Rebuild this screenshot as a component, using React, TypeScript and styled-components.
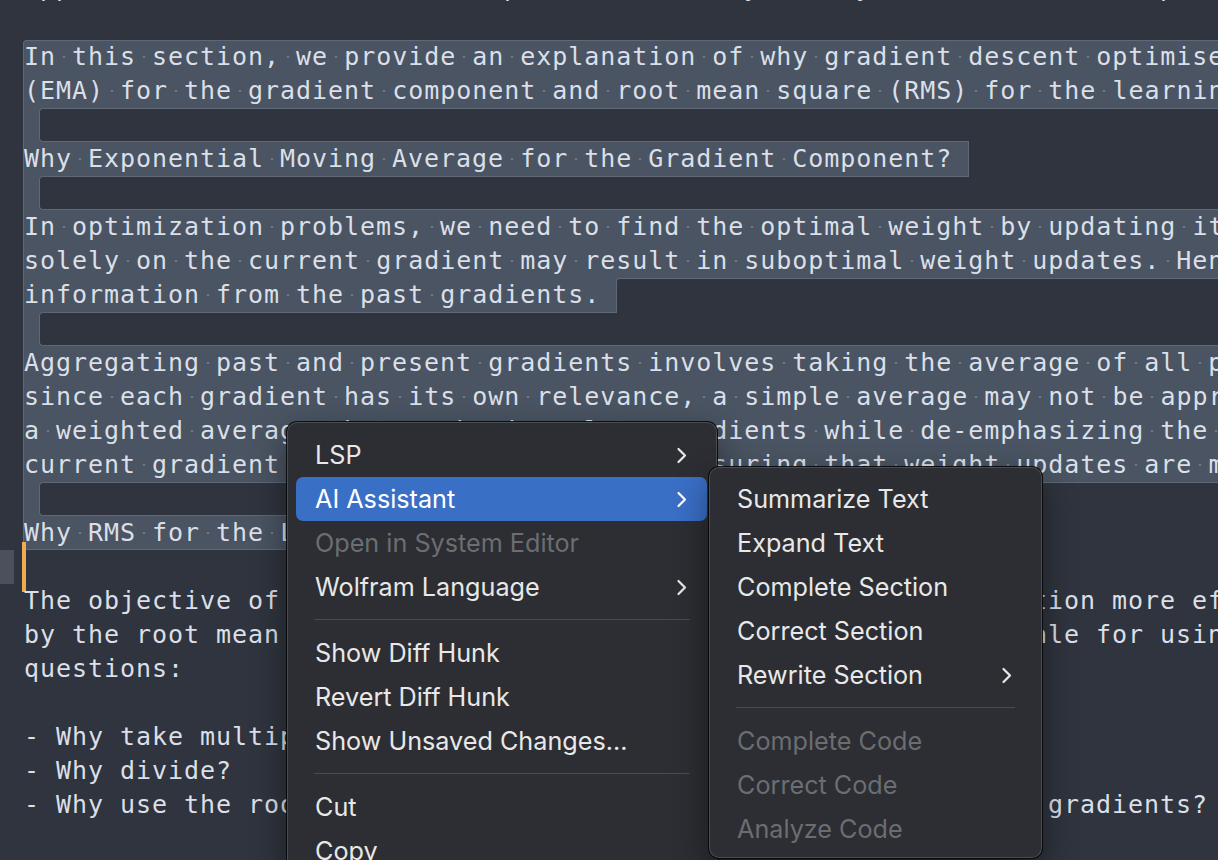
import React from 'react';
import styled, { createGlobalStyle } from 'styled-components';

const GlobalStyle = createGlobalStyle`
  html, body {
    margin: 0;
    padding: 0;
    background: #2f343e;
  }
  body {
    width: 1218px;
    height: 860px;
    overflow: hidden;
  }
`;

const BG = '#2f343e';
const SEL = '#4a5462';
const SEL_EDGE = '#5e6877';

const Editor = styled.div`
  position: relative;
  width: 1218px;
  height: 860px;
  overflow: hidden;
  background: ${BG};
  font-family: 'DejaVu Sans Mono', 'Liberation Mono', monospace;
  font-size: 25px;
  letter-spacing: 0.949px;
  color: #dadfe8;
`;

const Scroller = styled.div`
  position: relative;
  z-index: 0;
  display: flex;
  margin-top: -29px;
`;

const Gutter = styled.div`
  flex: none;
  width: 23px;
  display: flex;
  flex-direction: column;
  padding-top: 1px;
`;

const GutterRow = styled.div<{ $active?: boolean }>`
  flex: none;
  height: 34px;
  width: 14px;
  background: ${(p) => (p.$active ? '#4a515c' : 'transparent')};
`;

const Lines = styled.div`
  flex: 1;
  min-width: 0;
  display: flex;
  flex-direction: column;
`;

const Row = styled.div<{ $h?: number }>`
  flex: none;
  position: relative;
  display: flex;
  height: ${(p) => p.$h ?? 34}px;
  line-height: 34px;
  white-space: pre;
`;

const Text = styled.span`
  flex: none;
  padding-left: 1px;
`;

const Ws = styled.span`
  position: relative;
  display: inline-block;
  vertical-align: top;
  height: 34px;
  &::after {
    content: '';
    position: absolute;
    left: 7px;
    top: 16px;
    width: 2px;
    height: 2px;
    border-radius: 1px;
    background: #808998;
  }
`;

const Eol = styled.span`
  flex: none;
  width: 16px;
`;

const Selection = styled.div`
  display: flex;
  flex-direction: column;
  margin-right: -12px;
  background: ${SEL};
  border-radius: 4px 0 0 4px;
  box-shadow: inset 0 0 0 1px ${SEL_EDGE};
`;

const Gap = styled.div`
  flex: 1;
  margin-left: 16px;
  background: ${BG};
  border: 1px solid ${SEL_EDGE};
  border-right: none;
  border-radius: 4px 0 0 4px;
`;

const Tail = styled.div<{ $top?: boolean; $up?: boolean; $down?: boolean }>`
  flex: 1;
  position: relative;
  z-index: 1;
  background: ${BG};
  border-left: 1px solid ${SEL_EDGE};
  border-top: ${(p) => (p.$top ? `1px solid ${SEL_EDGE}` : 'none')};
  border-top-left-radius: ${(p) => (p.$top ? '4px' : '0')};
  margin-top: ${(p) => (p.$up ? '-1px' : '0')};
  margin-bottom: ${(p) => (p.$down ? '-1px' : '0')};
`;

const Cursor = styled.div`
  position: absolute;
  left: -1px;
  top: -8px;
  width: 4px;
  height: 50px;
  background: #f0aa4f;
`;

/* ---------- context menu ---------- */

const MenuPanel = styled.div<{ $x: number; $y: number; $w: number; $pt: number }>`
  position: absolute;
  z-index: 10;
  left: ${(p) => p.$x}px;
  top: ${(p) => p.$y}px;
  width: ${(p) => p.$w}px;
  box-sizing: border-box;
  padding: ${(p) => p.$pt}px 0 7px;
  display: flex;
  flex-direction: column;
  background: #2c2e33;
  border-radius: 10px;
  box-shadow: 0 0 0 1px rgba(6, 7, 9, 0.9), inset 0 0 0 1px rgba(255, 255, 255, 0.15),
    0 14px 34px rgba(0, 0, 0, 0.45);
  font-family: Inter, 'Liberation Sans', sans-serif;
  letter-spacing: 0;
`;

const Item = styled.div<{ $active?: boolean; $disabled?: boolean }>`
  flex: none;
  height: 44px;
  margin: 0 10px 0 9px;
  padding: 0 20px 0 19px;
  display: flex;
  align-items: center;
  justify-content: space-between;
  border-radius: 7px;
  font-size: 25.2px;
  line-height: 44px;
  color: ${(p) => (p.$disabled ? '#6b6d72' : p.$active ? '#ffffff' : '#e8e8e8')};
  background: ${(p) => (p.$active ? '#3a6fc6' : 'transparent')};
`;

const Sep = styled.div`
  flex: none;
  height: 1px;
  margin: 10px 27px 11px;
  background: #4a4b50;
`;

const Chevron: React.FC = () => (
  <svg width="11" height="17" viewBox="0 0 11 17" fill="none">
    <polyline
      points="2.5,2 9,8.5 2.5,15"
      stroke="currentColor"
      strokeWidth="2.2"
      strokeLinecap="round"
      strokeLinejoin="round"
    />
  </svg>
);

type MenuEntry =
  | { sep: true }
  | { label: string; sub?: boolean; active?: boolean; disabled?: boolean; sep?: false };

const mainMenu: MenuEntry[] = [
  { label: 'LSP', sub: true },
  { label: 'AI Assistant', sub: true, active: true },
  { label: 'Open in System Editor', disabled: true },
  { label: 'Wolfram Language', sub: true },
  { sep: true },
  { label: 'Show Diff Hunk' },
  { label: 'Revert Diff Hunk' },
  { label: 'Show Unsaved Changes...' },
  { sep: true },
  { label: 'Cut' },
  { label: 'Copy' },
  { label: 'Paste' },
];

const aiMenu: MenuEntry[] = [
  { label: 'Summarize Text' },
  { label: 'Expand Text' },
  { label: 'Complete Section' },
  { label: 'Correct Section' },
  { label: 'Rewrite Section', sub: true },
  { sep: true },
  { label: 'Complete Code', disabled: true },
  { label: 'Correct Code', disabled: true },
  { label: 'Analyze Code', disabled: true },
];

const MenuList: React.FC<{ items: MenuEntry[] }> = ({ items }) => (
  <>
    {items.map((it, i) =>
      'label' in it ? (
        <Item key={i} $active={it.active} $disabled={it.disabled}>
          <span>{it.label}</span>
          {it.sub && <Chevron />}
        </Item>
      ) : (
        <Sep key={i} />
      )
    )}
  </>
);

/* ---------- document ---------- */

type Line =
  | { k: 'plain'; t: string; cursor?: boolean; h?: number }
  | { k: 'full'; t: string }
  | { k: 'part'; t: string; top?: boolean; up?: boolean; down?: boolean }
  | { k: 'gap' };

const before: Line[] = [
  { k: 'plain', t: 'approach which is used in the parts of the key entity and the last one part.', h: 35 },
  { k: 'plain', t: '' },
];

const selected: Line[] = [
  { k: 'full', t: 'In this section, we provide an explanation of why gradient descent optimisers use an exponential moving average' },
  { k: 'full', t: '(EMA) for the gradient component and root mean square (RMS) for the learning rate component.' },
  { k: 'gap' },
  { k: 'part', t: 'Why Exponential Moving Average for the Gradient Component?', up: true, down: true },
  { k: 'gap' },
  { k: 'full', t: 'In optimization problems, we need to find the optimal weight by updating it iteratively. Relying' },
  { k: 'full', t: 'solely on the current gradient may result in suboptimal weight updates. Hence, it is useful to include' },
  { k: 'part', t: 'information from the past gradients.', top: true, down: true },
  { k: 'gap' },
  { k: 'full', t: 'Aggregating past and present gradients involves taking the average of all past gradients. However,' },
  { k: 'full', t: 'since each gradient has its own relevance, a simple average may not be appropriate. Instead, we use' },
  { k: 'full', t: 'a weighted average that emphasises late gradients while de-emphasizing the older ones, so that the' },
  { k: 'full', t: 'current gradient and the past ones, thus ensuring that weight updates are more stable and smooth.' },
  { k: 'gap' },
  { k: 'part', t: 'Why RMS for the Learning Rate Component?', up: true },
];

const after: Line[] = [
  { k: 'plain', t: '', cursor: true },
  { k: 'plain', t: 'The objective of the learning rate part is to make the optimization more efficient. This is achieved' },
  { k: 'plain', t: 'by the root mean square (RMS) of gradients. Below is the rationale for using it by answering three' },
  { k: 'plain', t: 'questions:' },
  { k: 'plain', t: '' },
  { k: 'plain', t: '- Why take multiple past gradients into account?' },
  { k: 'plain', t: '- Why divide?' },
  { k: 'plain', t: '- Why use the root mean square (RMS) of the current and earlier gradients?' },
  { k: 'plain', t: '' },
  { k: 'plain', t: '' },
];

const Dotted: React.FC<{ text: string }> = ({ text }) => (
  <Text>
    {text.split(' ').map((w, i) => (
      <React.Fragment key={i}>
        {i > 0 && <Ws> </Ws>}
        {w}
      </React.Fragment>
    ))}
  </Text>
);

const LineRow: React.FC<{ line: Line }> = ({ line }) => {
  switch (line.k) {
    case 'plain':
      return (
        <Row $h={line.h}>
          {line.cursor && <Cursor />}
          <Text>{line.t}</Text>
        </Row>
      );
    case 'full':
      return (
        <Row>
          <Dotted text={line.t} />
        </Row>
      );
    case 'part':
      return (
        <Row>
          <Dotted text={line.t} />
          <Eol />
          <Tail $top={line.top} $up={line.up} $down={line.down} />
        </Row>
      );
    case 'gap':
      return (
        <Row>
          <Gap />
        </Row>
      );
  }
};

const totalRows = before.length + selected.length + after.length;
const activeRow = before.length + selected.length;

export default function App() {
  return (
    <>
      <GlobalStyle />
      <Editor>
        <Scroller>
          <Gutter>
            {Array.from({ length: totalRows }, (_, i) => (
              <GutterRow key={i} $active={i === activeRow} />
            ))}
          </Gutter>
          <Lines>
            {before.map((l, i) => (
              <LineRow key={`b${i}`} line={l} />
            ))}
            <Selection>
              {selected.map((l, i) => (
                <LineRow key={`s${i}`} line={l} />
              ))}
            </Selection>
            {after.map((l, i) => (
              <LineRow key={`a${i}`} line={l} />
            ))}
          </Lines>
        </Scroller>

        <MenuPanel $x={287} $y={422} $w={430} $pt={11}>
          <MenuList items={mainMenu} />
        </MenuPanel>
        <MenuPanel $x={709} $y={467} $w={333} $pt={10}>
          <MenuList items={aiMenu} />
        </MenuPanel>
      </Editor>
    </>
  );
}
